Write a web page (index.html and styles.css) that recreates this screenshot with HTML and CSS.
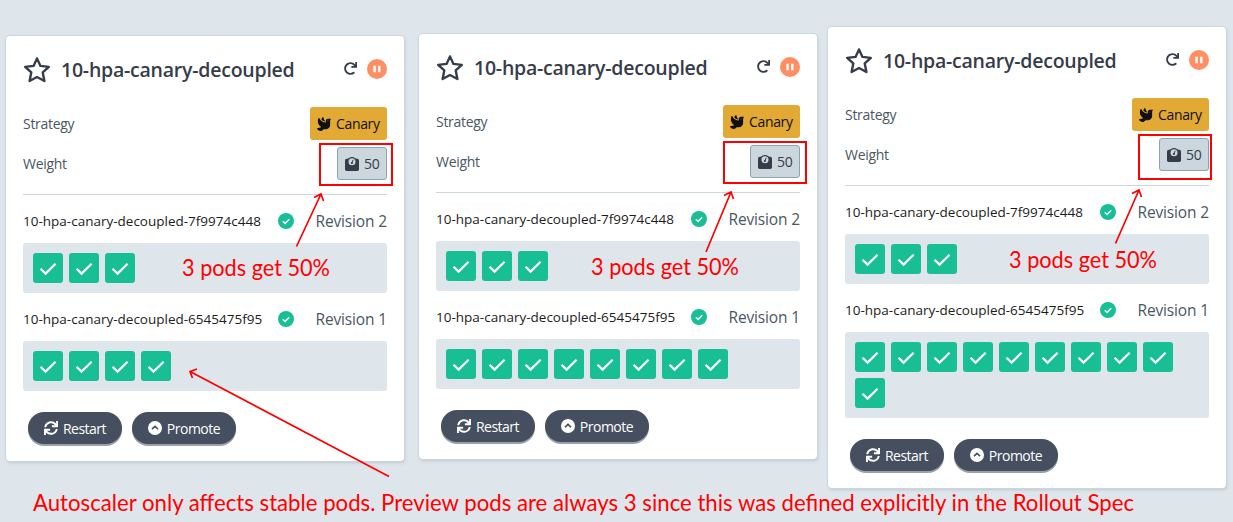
FILE: index.html
```html
<!DOCTYPE html>
<html lang="en">
<head>
<meta charset="utf-8">
<title>Rollouts</title>
<link rel="stylesheet" href="styles.css">
</head>
<body>
<svg class="defs" aria-hidden="true">
<symbol id="star" viewBox="0 0 26 26"><path d="M13 2.2 16.2 9.2 24 10.1 18.3 15.3 19.9 23.2 13 19.5 6.1 23.2 7.7 15.3 2 10.1 9.8 9.2Z" fill="none" stroke="currentColor" stroke-width="2.2" stroke-linejoin="round"/></symbol>
<symbol id="redo" viewBox="0 0 512 512"><path fill="currentColor" d="M500.33 0h-47.41a12 12 0 0 0-12 12.57l4 82.76A247.42 247.42 0 0 0 256 8C119.34 8 7.9 119.53 8 256.19 8.1 393.07 119.1 504 256 504a247.1 247.1 0 0 0 166.18-63.91 12 12 0 0 0 .48-17.43l-34-34a12 12 0 0 0-16.38-.55A176 176 0 1 1 402.1 157.8l-101.53-4.87a12 12 0 0 0-12.57 12v47.41a12 12 0 0 0 12 12h200.33a12 12 0 0 0 12-12V12a12 12 0 0 0-12-12z"/></symbol>
<symbol id="pause" viewBox="0 0 20 20"><circle cx="10" cy="10" r="10" fill="#ff8f62"/><path d="M7.6 6.700v6.600M12.3 6.700v6.600" stroke="#fff" stroke-width="2.4"/></symbol>
<symbol id="dove" viewBox="0 0 512 512"><path fill="currentColor" d="M288 167.2v-28.1c-28.2-36.3-47.1-79.3-54.1-125.2-2.1-13.5-19-18.8-27.8-8.3-21.1 24.9-37.7 54.1-48.9 86.5 34.2 38.3 80 64.6 130.8 75.1zM400 64c-44.2 0-80 35.9-80 80.1v59.4C215.6 197.3 127 133 87 41.8c-5.5-12.5-23.2-13.2-29-.9C41.4 76 32 115.2 32 156.6c0 70.8 34.1 136.9 85.1 185.9 13.2 12.7 26.1 23.2 38.9 32.8l-143.9 36C1.4 414-3.4 426.4 2.6 435.7 20 462.6 63 508.2 155.8 512c8 .3 16-2.6 22.1-7.9l65.2-56.1H320c88.4 0 160-71.5 160-159.9V128l32-64H400zm0 96.1c-8.800 0-16-7.200-16-16s7.200-16 16-16 16 7.200 16 16-7.200 16-16 16z"/></symbol>
<symbol id="weight" viewBox="0 0 14 14"><rect y="1.800" width="14" height="12.200" rx="1.700" fill="currentColor"/><circle cx="7" cy="4.600" r="4.600" fill="currentColor"/><circle cx="7" cy="4.700" r="3.500" fill="#ccd6dd"/><path d="M8.200 2.800 7 5.600" stroke="currentColor" stroke-width="1"/><circle cx="6.900" cy="6" r="1.100" fill="currentColor"/></symbol>
<symbol id="ok" viewBox="0 0 16 16"><circle cx="8" cy="8" r="8" fill="#18be94"/><path d="M4.8 8.2 7.1 10.4 11.2 6.2" fill="none" stroke="#fff" stroke-width="1.5"/></symbol>
<symbol id="check" viewBox="0 0 30 30"><path d="M7.5 15.7 12.6 20.6 22.6 10.8" fill="none" stroke="#fff" stroke-width="2.200"/></symbol>
<symbol id="sync" viewBox="0 0 512 512"><path fill="currentColor" d="M440.65 12.57l4 82.77A247.16 247.16 0 0 0 255.83 8C134.73 8 33.91 94.92 12.29 209.82A12 12 0 0 0 24.09 224h49.05a12 12 0 0 0 11.67-9.26 175.91 175.91 0 0 1 317-56.94l-101.46-4.86a12 12 0 0 0-12.57 12v47.41a12 12 0 0 0 12 12H500a12 12 0 0 0 12-12V12a12 12 0 0 0-12-12h-47.37a12 12 0 0 0-11.98 12.57zM255.83 432a175.61 175.61 0 0 1-146-77.8l101.8 4.87a12 12 0 0 0 12.57-12v-47.4a12 12 0 0 0-12-12H12a12 12 0 0 0-12 12V500a12 12 0 0 0 12 12h47.35a12 12 0 0 0 12-12.6l-4.15-82.57A247.17 247.17 0 0 0 255.83 504c121.11 0 221.93-86.92 243.55-201.82a12 12 0 0 0-11.8-14.18h-49.05a12 12 0 0 0-11.67 9.26A175.86 175.86 0 0 1 255.83 432z"/></symbol>
<symbol id="up" viewBox="0 0 14 14"><circle cx="7" cy="7" r="7" fill="#fff"/><path d="M4 8.2 7 5.3 10 8.2" fill="none" stroke="#454f5f" stroke-width="1.6"/></symbol>
</svg>
<main class="board">
<article class="card card-a">
  <header class="head"><svg class="star"><use href="#star"/></svg><h2 class="title">10-hpa-canary-decoupled</h2><svg class="redo"><use href="#redo"/></svg><svg class="pause"><use href="#pause"/></svg></header>
  <div class="row"><span class="label">Strategy</span><span class="tag canary"><svg class="ico"><use href="#dove"/></svg>Canary</span></div>
  <div class="row"><span class="label">Weight</span><span class="tag weight"><svg class="ico"><use href="#weight"/></svg>50</span></div>
  <section class="revisions">
    <div class="rev"><span class="name">10-hpa-canary-decoupled-7f9974c448</span><svg class="ok"><use href="#ok"/></svg><span class="num">Revision 2</span></div>
    <div class="pods"><svg class="pod"><use href="#check"/></svg><svg class="pod"><use href="#check"/></svg><svg class="pod"><use href="#check"/></svg></div>
    <div class="rev"><span class="name">10-hpa-canary-decoupled-6545475f95</span><svg class="ok"><use href="#ok"/></svg><span class="num">Revision 1</span></div>
    <div class="pods"><svg class="pod"><use href="#check"/></svg><svg class="pod"><use href="#check"/></svg><svg class="pod"><use href="#check"/></svg><svg class="pod"><use href="#check"/></svg></div>
  </section>
  <footer class="actions"><button class="btn restart"><svg class="ico"><use href="#sync"/></svg>Restart</button><button class="btn promote"><svg class="ico"><use href="#up"/></svg>Promote</button></footer>
</article>
<article class="card card-b">
  <header class="head"><svg class="star"><use href="#star"/></svg><h2 class="title">10-hpa-canary-decoupled</h2><svg class="redo"><use href="#redo"/></svg><svg class="pause"><use href="#pause"/></svg></header>
  <div class="row"><span class="label">Strategy</span><span class="tag canary"><svg class="ico"><use href="#dove"/></svg>Canary</span></div>
  <div class="row"><span class="label">Weight</span><span class="tag weight"><svg class="ico"><use href="#weight"/></svg>50</span></div>
  <section class="revisions">
    <div class="rev"><span class="name">10-hpa-canary-decoupled-7f9974c448</span><svg class="ok"><use href="#ok"/></svg><span class="num">Revision 2</span></div>
    <div class="pods"><svg class="pod"><use href="#check"/></svg><svg class="pod"><use href="#check"/></svg><svg class="pod"><use href="#check"/></svg></div>
    <div class="rev"><span class="name">10-hpa-canary-decoupled-6545475f95</span><svg class="ok"><use href="#ok"/></svg><span class="num">Revision 1</span></div>
    <div class="pods"><svg class="pod"><use href="#check"/></svg><svg class="pod"><use href="#check"/></svg><svg class="pod"><use href="#check"/></svg><svg class="pod"><use href="#check"/></svg><svg class="pod"><use href="#check"/></svg><svg class="pod"><use href="#check"/></svg><svg class="pod"><use href="#check"/></svg><svg class="pod"><use href="#check"/></svg></div>
  </section>
  <footer class="actions"><button class="btn restart"><svg class="ico"><use href="#sync"/></svg>Restart</button><button class="btn promote"><svg class="ico"><use href="#up"/></svg>Promote</button></footer>
</article>
<article class="card card-c">
  <header class="head"><svg class="star"><use href="#star"/></svg><h2 class="title">10-hpa-canary-decoupled</h2><svg class="redo"><use href="#redo"/></svg><svg class="pause"><use href="#pause"/></svg></header>
  <div class="row"><span class="label">Strategy</span><span class="tag canary"><svg class="ico"><use href="#dove"/></svg>Canary</span></div>
  <div class="row"><span class="label">Weight</span><span class="tag weight"><svg class="ico"><use href="#weight"/></svg>50</span></div>
  <section class="revisions">
    <div class="rev"><span class="name">10-hpa-canary-decoupled-7f9974c448</span><svg class="ok"><use href="#ok"/></svg><span class="num">Revision 2</span></div>
    <div class="pods"><svg class="pod"><use href="#check"/></svg><svg class="pod"><use href="#check"/></svg><svg class="pod"><use href="#check"/></svg></div>
    <div class="rev"><span class="name">10-hpa-canary-decoupled-6545475f95</span><svg class="ok"><use href="#ok"/></svg><span class="num">Revision 1</span></div>
    <div class="pods"><svg class="pod"><use href="#check"/></svg><svg class="pod"><use href="#check"/></svg><svg class="pod"><use href="#check"/></svg><svg class="pod"><use href="#check"/></svg><svg class="pod"><use href="#check"/></svg><svg class="pod"><use href="#check"/></svg><svg class="pod"><use href="#check"/></svg><svg class="pod"><use href="#check"/></svg><svg class="pod"><use href="#check"/></svg><svg class="pod"><use href="#check"/></svg></div>
  </section>
  <footer class="actions"><button class="btn restart"><svg class="ico"><use href="#sync"/></svg>Restart</button><button class="btn promote"><svg class="ico"><use href="#up"/></svg>Promote</button></footer>
</article>
</main>
<svg class="notes" viewBox="0 0 1233 522">
  <g class="ink">
    <rect x="320" y="144" width="72" height="41"/>
    <rect x="724" y="142" width="82" height="41"/>
    <rect x="1139" y="135" width="72" height="44"/>
  </g>
  <g class="arrow">
    <path d="M296.5 246.5 321 194M314 197.500 321 194 323.500 201"/>
    <path d="M706 252 731 192M724 195.500 731 192 733.500 199"/>
    <path d="M1115.500 243.500 1139 190M1132 193.500 1139 190 1141.500 197"/>
    <path d="M389 476.500 190 371.500M192.500 378 190 371.500 197 369"/>
  </g>
  <g class="note">
    <text x="182" y="276" textLength="148" lengthAdjust="spacingAndGlyphs">3 pods get 50%</text>
    <text x="591" y="275" textLength="148" lengthAdjust="spacingAndGlyphs">3 pods get 50%</text>
    <text x="1009" y="268" textLength="148" lengthAdjust="spacingAndGlyphs">3 pods get 50%</text>
    <text x="33" y="511" textLength="1101" lengthAdjust="spacingAndGlyphs">Autoscaler only affects stable pods. Preview pods are always 3 since this was defined explicitly in the Rollout Spec</text>
  </g>
</svg>
</body>
</html>
```
FILE: styles.css
```css
* { box-sizing: border-box; }
body { margin: 0; height: 522px; overflow: hidden; position: relative; background: #dee5eb; font-family: "Open Sans", "Noto Sans", sans-serif; font-size: 14px; }
svg { display: block; flex: none; }
.defs { position: absolute; width: 0; height: 0; }
.board { display: flex; align-items: flex-start; padding-left: 6px; }
.card { width: 398px; flex: none; padding: 16px 17px; background: #fff; border-radius: 4px; box-shadow: 0 0 1px 1px #ccd6dd, 1px 2px 3px rgba(100,120,140,.25); }
.card-a { margin-top: 36px; height: 425px; }
.card-b { margin-top: 34px; margin-left: 15px; height: 425px; }
.card-c { margin-top: 27px; margin-left: 11px; height: 461px; }
.head { display: flex; align-items: center; height: 36px; color: #363c4a; margin-bottom: 19px; }
.star { width: 28px; height: 28px; }
.title { margin: 0 auto 0 10px; font-size: 19.500px; font-weight: 600; line-height: 36px; white-space: nowrap; letter-spacing: -.23px; }
.redo { width: 13px; height: 13px; margin-right: 10px; margin-bottom: 3px; }
.pause { width: 20px; height: 20px; margin-bottom: 3px; }
.row { display: flex; align-items: center; justify-content: space-between; height: 33px; margin-bottom: 7px; }
.label { color: #495763; letter-spacing: -.3px; }
.tag { display: flex; align-items: center; height: 33px; border-radius: 3px; gap: 5px; letter-spacing: -.35px; }
.ico { width: 14px; height: 14px; }
.canary { width: 77px; background: #e2a935; color: #0f0f14; padding: 0 7px; }
.weight { width: 50px; background: #ccd6dd; border: 1px solid #8fa4b1; color: #363c4a; padding: 0 7px; }
.revisions { border-top: 1px solid #ccd6dd; margin-top: 14px; padding-top: 4px; }
.rev { display: flex; align-items: center; height: 44px; }
.rev + .pods + .rev { height: 48px; padding-top: 4px; }
.name { width: 255px; color: #1c1c1c; font-size: 13.500px; white-space: nowrap; letter-spacing: 0; }
.ok { width: 16px; height: 16px; }
.num { margin-left: auto; font-size: 15.500px; color: #495763; letter-spacing: -.15px; }
.pods { display: flex; flex-wrap: wrap; gap: 6px; padding: 10px; border-radius: 3px; background: #dee5eb; }
.pod { width: 30px; height: 30px; border-radius: 3px; background: #18be94; }
.actions { display: flex; gap: 10px; padding: 21px 0 0 5px; }
.btn { display: flex; align-items: center; justify-content: center; gap: 5px; height: 32px; padding: 0; border: 0; border-radius: 16px; background: #454f5f; color: #fff; font: 14px "Open Sans", "Noto Sans", sans-serif; letter-spacing: -.5px; box-shadow: 0 2px 0 #9aa1a8; }
.restart { width: 94px; }
.promote { width: 104px; }
.notes { position: absolute; left: 0; top: 0; width: 1233px; height: 522px; }
.ink { fill: none; stroke: red; stroke-width: 2; }
.arrow { fill: none; stroke: red; stroke-width: 1.700; }
.note { fill: red; font-family: Lato, "Open Sans", sans-serif; font-size: 22.500px; }
```
